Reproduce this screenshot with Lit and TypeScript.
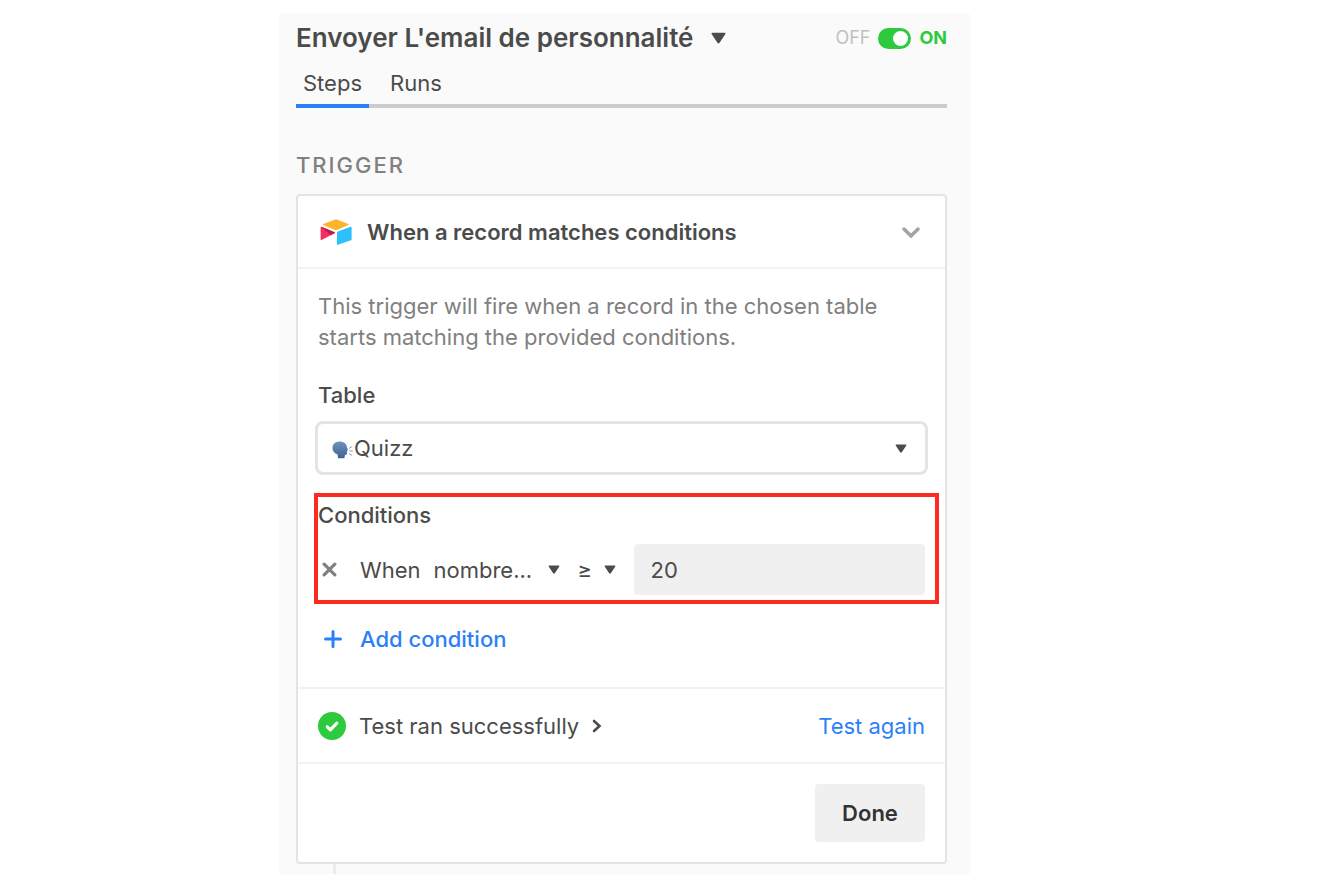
import { LitElement, html, css, svg } from "lit";
import { customElement, state } from "lit/decorators.js";

const caret = (cls: string) => html`
  <svg class=${cls} viewBox="0 0 14 11" aria-hidden="true">
    <path d="M1.2 0.5H12.8Q14 0.8 13.3 2L8 10Q7 11.2 6 10L0.7 2Q0 0.8 1.2 0.5Z" fill="currentColor" />
  </svg>
`;

const tableLogo = html`
  <svg class="logo" viewBox="0 0 32 26" aria-hidden="true">
    ${svg`
      <path d="M15.2 0.4Q16 0.1 16.8 0.4L28.4 5Q29.4 5.6 28.4 6.1L16.9 10.9Q16 11.3 15.1 10.9L3.2 6.1Q2.2 5.6 3.2 5Z" fill="#fcb42d" />
      <path d="M17 13.6Q17 12.9 17.7 12.6L30.6 7.8Q31.6 7.5 31.6 8.5V20.2Q31.6 21 30.9 21.3L18 25.8Q17 26.1 17 25.2Z" fill="#2dc0fb" />
      <path d="M0.6 8.6Q0.6 7.4 1.7 7.8L14.6 13.2Q15.3 13.7 14.5 14.2L2 20.8Q0.6 21.4 0.6 20.2Z" fill="#f62d60" />
      <path d="M1.3 7.7L14.6 13.2Q15.3 13.7 14.5 14.2L10.6 16.2Z" fill="#b71f48" />
    `}
  </svg>
`;

const speakingHead = html`
  <svg class="head" viewBox="0 0 21 18" aria-hidden="true">
    <defs>
      <linearGradient id="skin" x1="0" y1="0" x2="0" y2="1">
        <stop offset="0" stop-color="#6d93bd" />
        <stop offset="1" stop-color="#41638f" />
      </linearGradient>
    </defs>
    <path
      d="M7.5 0.5C11.5 0.3 14.6 2.8 14.9 6L16 9.2L14.9 9.9L15.1 12.6Q15 14.2 12.9 14L12.4 17.2H6L5.6 13.6C2.4 12.4 0.5 9.9 0.5 6.9C0.5 3 3.5 0.6 7.5 0.5Z"
      fill="url(#skin)"
    />
    <path d="M17 7.4L20.2 5.4M17.6 10H20.8M17 12.4L20.2 14.6" stroke="#7f9fc3" stroke-width="1" fill="none" />
  </svg>
`;

@customElement("app-root")
export class AppRoot extends LitElement {
  @state() private enabled = true;

  static styles = css`
    :host {
      display: grid;
      grid-template-columns: 279fr minmax(0, 691fr) 356fr;
      padding: 14px 0;
      background: #fff;
      color: #4b4b4b;
      font: 22px/26px Inter, "Liberation Sans", sans-serif;
    }
    * {
      box-sizing: border-box;
    }
    h1,
    h2,
    h3,
    p {
      margin: 0;
    }
    button,
    select,
    input {
      margin: 0;
      padding: 0;
      border: 0;
      background: none;
      color: inherit;
      font: inherit;
    }
    select,
    input {
      appearance: none;
    }
    svg {
      display: block;
      flex: none;
    }
    a {
      color: #2d7ff9;
      text-decoration: none;
    }
    .panel {
      grid-column: 2;
      padding: 0 23px 0 17px;
      background: #fafafa;
    }
    .top {
      display: flex;
      align-items: center;
      justify-content: space-between;
      height: 48px;
    }
    .name {
      display: flex;
      align-items: center;
      gap: 18px;
      font-size: 26px;
      font-weight: 600;
      white-space: nowrap;
    }
    .caret-lg {
      width: 15px;
      height: 12px;
    }
    .caret-sm {
      width: 12px;
      height: 9px;
    }
    .toggle {
      display: flex;
      align-items: center;
      gap: 8px;
      font-size: 18px;
      color: #c0c0c0;
    }
    .switch {
      display: flex;
      align-items: center;
      width: 33px;
      height: 21px;
      padding: 3px;
      border-radius: 11px;
      background: #c0c0c0;
    }
    .switch::before {
      content: "";
      width: 15px;
      height: 15px;
      border-radius: 50%;
      background: #fff;
    }
    .switch:checked {
      justify-content: flex-end;
      background: #2dca3e;
    }
    .on {
      color: #2dca3e;
      font-weight: 700;
    }
    .tabs {
      display: flex;
      height: 46px;
      gap: 14px;
      box-shadow: inset 0 -4px #cccccc;
    }
    .tab {
      padding: 0 7px 4px;
      color: inherit;
      line-height: 42px;
    }
    .tab.active {
      box-shadow: inset 0 -4px #2d7ff9;
    }
    .group {
      margin: 44px 0 16px;
      font-size: 22px;
      font-weight: 500;
      letter-spacing: 2px;
      color: #808080;
    }
    .card {
      border: 2px solid #e4e4e4;
      border-radius: 4px;
      background: #fff;
    }
    .card-head {
      display: flex;
      align-items: center;
      gap: 15px;
      width: 100%;
      height: 73px;
      padding: 0 25px 0 22px;
      border-bottom: 2px solid #f2f2f2;
      font-weight: 600;
      text-align: left;
    }
    .card-head span {
      flex: 1;
    }
    .logo {
      width: 32px;
      height: 26px;
    }
    .chevron {
      width: 18px;
      height: 12px;
    }
    .body {
      padding: 22px 20px 35px;
    }
    .about {
      line-height: 31px;
      color: #808080;
    }
    .label {
      display: block;
      margin: 29px 0 13px;
      font-weight: 500;
    }
    .picker {
      display: grid;
      align-items: center;
      grid-template-columns: 17px 21px 1fr 12px 21px;
      height: 54px;
      margin: 0 -3px;
    }
    .picker select {
      grid-area: 1 / 1 / 2 / -1;
      width: 100%;
      height: 100%;
      padding: 0 40px 0 36px;
      border: 3px solid #e4e4e4;
      border-radius: 8px;
    }
    .picker .head {
      grid-area: 1 / 2;
      width: 21px;
      height: 22px;
      padding-top: 4px;
    }
    .picker .caret-sm {
      grid-area: 1 / 4;
    }
    .picker svg,
    .choice svg {
      pointer-events: none;
    }
    .conditions {
      margin: 18px -14px 0 -4px;
      padding: 5px 10px 5px 0;
      border: 4px solid #fc2a20;
    }
    .conditions h3 {
      font-size: 22px;
      font-weight: 500;
    }
    .rule {
      display: flex;
      align-items: center;
      margin-top: 16px;
    }
    .remove {
      width: 42px;
      padding-left: 4px;
    }
    .cross {
      width: 15px;
      height: 15px;
    }
    .choice {
      display: grid;
      align-items: center;
      grid-template-columns: 1fr 12px;
    }
    .choice select {
      grid-area: 1 / 1 / 2 / -1;
      width: 100%;
    }
    .choice svg {
      grid-area: 1 / 2;
    }
    .field {
      width: 126px;
      margin-left: 13px;
    }
    .operator {
      width: 38px;
      margin: 0 18px;
    }
    .value {
      flex: 1;
      min-width: 0;
      height: 51px;
      padding: 0 17px;
      border-radius: 4px;
      background: #f0f0f0;
    }
    .add {
      display: flex;
      align-items: center;
      gap: 18px;
      margin-top: 22px;
      padding-left: 6px;
      color: #2d7ff9;
      font-weight: 500;
    }
    .plus {
      width: 18px;
      height: 18px;
    }
    .result {
      display: flex;
      align-items: center;
      justify-content: space-between;
      height: 77px;
      padding: 0 20px;
      border: solid #f2f2f2;
      border-width: 2px 0;
    }
    .status {
      display: flex;
      align-items: center;
      gap: 13px;
    }
    .badge {
      width: 28px;
      height: 28px;
    }
    .arrow {
      width: 10px;
      height: 14px;
    }
    .foot {
      display: flex;
      justify-content: flex-end;
      padding: 20px;
    }
    .done {
      width: 110px;
      height: 58px;
      border-radius: 4px;
      background: #f0f0f0;
      color: #333;
      font-weight: 600;
    }
    .connector {
      width: 3px;
      height: 10px;
      margin-left: 37px;
      background: #ebebeb;
    }
  `;

  private flip(e: Event) {
    this.enabled = (e.target as HTMLInputElement).checked;
  }

  render() {
    return html`
      <main class="panel">
        <header class="top">
          <h1>
            <button class="name">Envoyer L'email de personnalité ${caret("caret-lg")}</button>
          </h1>
          <label class="toggle">
            <span>OFF</span>
            <input class="switch" type="checkbox" role="switch" .checked=${this.enabled} @change=${this.flip} />
            <span class="on">ON</span>
          </label>
        </header>
        <nav class="tabs">
          <a class="tab active" href="#steps" aria-current="page">Steps</a>
          <a class="tab" href="#runs">Runs</a>
        </nav>

        <h2 class="group">TRIGGER</h2>
        <section class="card">
          <button class="card-head" aria-expanded="true">
            ${tableLogo}
            <span>When a record matches conditions</span>
            <svg class="chevron" viewBox="0 0 18 12" aria-hidden="true">
              <path d="M2 3L9 10L16 3" fill="none" stroke="#a3a3a3" stroke-width="3.4" stroke-linecap="round" />
            </svg>
          </button>
          <div class="body">
            <p class="about">
              This trigger will fire when a record in the chosen table starts matching the provided conditions.
            </p>
            <label class="label" for="table">Table</label>
            <div class="picker">
              <select id="table">
                <option>Quizz</option>
              </select>
              ${speakingHead} ${caret("caret-sm")}
            </div>

            <section class="conditions">
              <h3>Conditions</h3>
              <div class="rule">
                <button class="remove" aria-label="Remove condition">
                  <svg class="cross" viewBox="0 0 14 14" aria-hidden="true">
                    <path d="M2 2L12 12M12 2L2 12" stroke="#808080" stroke-width="3" stroke-linecap="round" />
                  </svg>
                </button>
                <label for="field">When</label>
                <div class="choice field">
                  <select id="field">
                    <option>nombre...</option>
                  </select>
                  ${caret("caret-sm")}
                </div>
                <div class="choice operator">
                  <select aria-label="Operator">
                    <option>≥</option>
                  </select>
                  ${caret("caret-sm")}
                </div>
                <input class="value" type="text" aria-label="Value" value="20" />
              </div>
            </section>

            <button class="add">
              <svg class="plus" viewBox="0 0 18 18" aria-hidden="true">
                <path d="M9 1.5V16.5M1.5 9H16.5" stroke="currentColor" stroke-width="3" stroke-linecap="round" />
              </svg>
              Add condition
            </button>
          </div>

          <div class="result">
            <button class="status">
              <svg class="badge" viewBox="0 0 28 28" aria-hidden="true">
                <circle cx="14" cy="14" r="14" fill="#2dca3e" />
                <path d="M9.3 14.8L12.4 17.8L18.8 11.2" fill="none" stroke="#fff" stroke-width="3.2" stroke-linecap="round" stroke-linejoin="round" />
              </svg>
              Test ran successfully
              <svg class="arrow" viewBox="0 0 10 14" aria-hidden="true">
                <path d="M2 2L7.5 7L2 12" fill="none" stroke="currentColor" stroke-width="2.6" stroke-linecap="round" />
              </svg>
            </button>
            <a href="#test">Test again</a>
          </div>
          <div class="foot">
            <button class="done">Done</button>
          </div>
        </section>
        <div class="connector"></div>
      </main>
    `;
  }
}
